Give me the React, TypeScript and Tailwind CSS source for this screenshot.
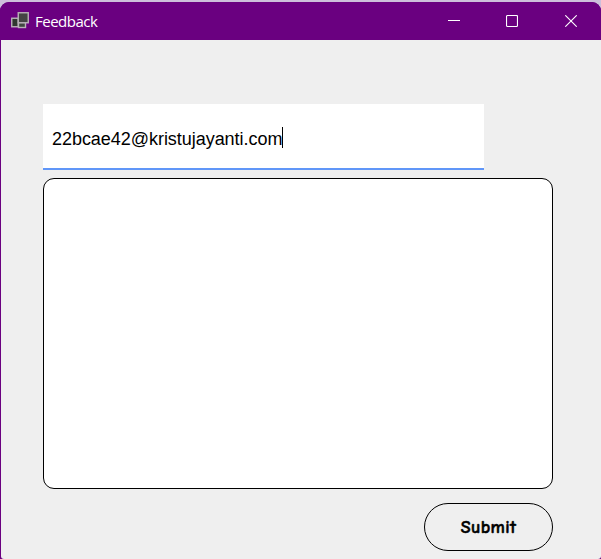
import React from "react";

function FormIcon() {
  return (
    <svg width="18" height="18" viewBox="0 0 18 18" className="block">
      <rect x="0.75" y="6.25" width="6.5" height="8.5" fill="#303830" stroke="#b8b2b8" strokeWidth="1.4" />
      <rect x="7.5" y="10.5" width="7" height="5" fill="#404840" stroke="#b8b2b8" strokeWidth="1.4" />
      <rect x="7.25" y="0.75" width="10" height="10" fill="#444444" stroke="#b8b2b8" strokeWidth="1.4" />
    </svg>
  );
}

function TitleBar() {
  return (
    <header className="flex h-[38px] shrink-0 items-center bg-[#6a0080] text-white">
      <div className="flex flex-1 items-center gap-1.5 pl-[11px]">
        <FormIcon />
        <span className="font-['Open_Sans','Noto_Sans',sans-serif] text-[15px] leading-5 tracking-[-0.5px]">
          Feedback
        </span>
      </div>
      <div className="flex h-full items-center">
        <button aria-label="Minimize" className="flex h-full w-[58px] items-center justify-center">
          <svg width="12" height="12" viewBox="0 0 12 12">
            <path d="M0 5.5H12" stroke="white" />
          </svg>
        </button>
        <button aria-label="Maximize" className="flex h-full w-[58px] items-center justify-center">
          <svg width="12" height="12" viewBox="0 0 12 12" fill="none">
            <rect x="0.5" y="0.5" width="11" height="11" rx="1" stroke="white" strokeWidth="1.15" />
          </svg>
        </button>
        <button aria-label="Close" className="flex h-full w-[60px] items-center justify-center">
          <svg width="12" height="12" viewBox="0 0 12 12">
            <path d="M0.3 0.3L11.7 11.7M11.7 0.3L0.3 11.7" stroke="white" strokeWidth="1.1" />
          </svg>
        </button>
      </div>
    </header>
  );
}

export default function App() {
  return (
    <div className="h-[559px] w-[601px] overflow-hidden bg-[#cdbfdb] pt-0.5">
      <div className="flex h-[557px] flex-col overflow-hidden rounded-t-[9px] bg-[#6a0080]">
        <TitleBar />
        <main className="ml-px flex flex-1 flex-col rounded-bl-[3px] rounded-br-[3px] bg-[#efefef] pl-[42px] pr-12 pt-16">
          <div className="flex h-[66px] w-[441px] items-start border-b-2 border-[#6096f8] bg-white pl-[9px] pt-[23px]">
            <span className="pt-px font-['Liberation_Sans',Arial,sans-serif] text-[18px] leading-[22px] tracking-[-0.04px] text-black">
              22bcae42@kristujayanti.com
            </span>
            <span className="h-[21px] w-px bg-black" />
          </div>
          <div className="mt-2 h-[311px] w-[510px] rounded-[11px] border border-black bg-white" />
          <button className="mt-3.5 flex h-12 w-[129px] items-center justify-center self-end rounded-full border border-black pt-0.5 font-['Comic_Sans_MS','Comic_Neue','Open_Sans',sans-serif] text-[18px] font-bold leading-6 tracking-[0.4px] text-black [-webkit-text-stroke:0.5px_black]">
            Submit
          </button>
        </main>
      </div>
    </div>
  );
}
